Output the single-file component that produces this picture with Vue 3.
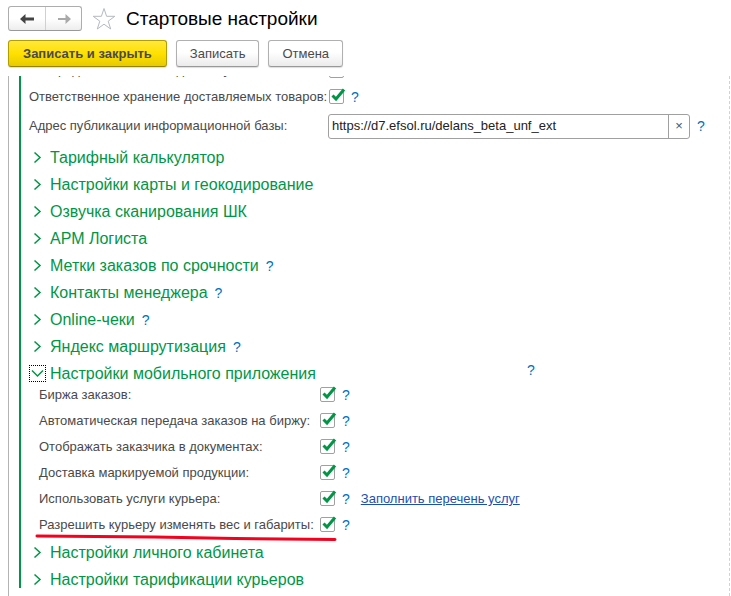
<script setup>
import { ref, reactive } from 'vue'

const address = ref('https://d7.efsol.ru/delans_beta_unf_ext')
const storage = ref(true)
const distribution = ref(false)

const groups = [
  { title: 'Тарифный калькулятор' },
  { title: 'Настройки карты и геокодирование' },
  { title: 'Озвучка сканирования ШК' },
  { title: 'АРМ Логиста' },
  { title: 'Метки заказов по срочности', help: true },
  { title: 'Контакты менеджера', help: true },
  { title: 'Online-чеки', help: true },
  { title: 'Яндекс маршрутизация', help: true },
]

const options = reactive([
  { id: 'exchange', label: 'Биржа заказов:', on: true },
  { id: 'auto', label: 'Автоматическая передача заказов на биржу:', on: true },
  { id: 'customer', label: 'Отображать заказчика в документах:', on: true },
  { id: 'marked', label: 'Доставка маркируемой продукции:', on: true },
  { id: 'services', label: 'Использовать услуги курьера:', on: true, link: 'Заполнить перечень услуг' },
  { id: 'weight', label: 'Разрешить курьеру изменять вес и габариты:', on: true, marked: true },
])

const tailGroups = [
  { title: 'Настройки личного кабинета' },
  { title: 'Настройки тарификации курьеров' },
]
</script>

<template>
  <div class="page">
    <header class="titlebar">
      <div class="history">
        <button type="button" aria-label="Назад">
          <svg width="16" height="12" viewBox="0 0 16 12"><path d="M1 6 L6.500 1 V4.500 H15 V7.500 H6.500 V11 Z" fill="#444" /></svg>
        </button>
        <button type="button" aria-label="Вперед">
          <svg width="16" height="12" viewBox="0 0 16 12"><path d="M15 6 L9.500 1 V5 H2 V7 H9.500 V11 Z" fill="#a9a9a9" /></svg>
        </button>
      </div>
      <button type="button" class="star" aria-label="В избранное">
        <svg width="24" height="24" viewBox="0 0 24 24"><path d="M12 1.500 L14.600 9.300 H22.800 L16.200 14.200 L18.700 22 L12 17.200 L5.300 22 L7.800 14.200 L1.200 9.300 H9.400 Z" fill="#fff" stroke="#b4bac0" /></svg>
      </button>
      <h1>Стартовые настройки</h1>
    </header>

    <div class="commands">
      <button type="button" class="cmd primary">Записать и закрыть</button>
      <button type="button" class="cmd">Записать</button>
      <button type="button" class="cmd">Отмена</button>
    </div>

    <main class="viewport">
      <div class="section">
        <div class="row top clipped">
          <label for="distribution">Распределение заказов доставку:</label>
          <input id="distribution" v-model="distribution" type="checkbox" class="check" />
        </div>
        <div class="row top">
          <label for="storage">Ответственное хранение доставляемых товаров:</label>
          <span class="tick">
            <input id="storage" v-model="storage" type="checkbox" class="check" />
            <svg v-if="storage" width="18" height="18" viewBox="0 0 18 18"><path d="M3.500 8.500 L7 12 L15 2.500" /></svg>
          </span>
          <button type="button" class="help">?</button>
        </div>
        <div class="row address">
          <label for="address">Адрес публикации информационной базы:</label>
          <div class="field">
            <input id="address" v-model="address" type="text" />
            <button type="button" aria-label="Очистить" @click="address = ''">×</button>
          </div>
          <button type="button" class="help">?</button>
        </div>

        <div v-for="g in groups" :key="g.title" class="group">
          <button type="button" class="toggle">
            <span class="arrow"><svg width="9" height="13" viewBox="0 0 9 13"><path d="M1.500 1.500 L7 6.500 L1.500 11.500" /></svg></span>
            {{ g.title }}
          </button>
          <button v-if="g.help" type="button" class="help">?</button>
        </div>

        <div class="group open">
          <button type="button" class="toggle">
            <span class="arrow focused"><svg width="13" height="9" viewBox="0 0 13 9"><path d="M1 1.500 L6.500 7 L12 1.500" /></svg></span>
            Настройки мобильного приложения
          </button>
          <button type="button" class="help">?</button>
        </div>

        <div class="options">
          <div v-for="o in options" :key="o.id" class="row option">
            <label :for="o.id">{{ o.label }}</label>
            <span class="tick">
              <input :id="o.id" v-model="o.on" type="checkbox" class="check" />
              <svg v-if="o.on" width="18" height="18" viewBox="0 0 18 18"><path d="M3.500 8.500 L7 12 L15 2.500" /></svg>
            </span>
            <button type="button" class="help">?</button>
            <a v-if="o.link" href="#">{{ o.link }}</a>
            <svg v-if="o.marked" class="underline" width="302" height="8" viewBox="0 0 302 8"><path d="M2 2 L120 3 L200 4.500 L300 5.500" /></svg>
          </div>
        </div>

        <div v-for="g in tailGroups" :key="g.title" class="group">
          <button type="button" class="toggle">
            <span class="arrow"><svg width="9" height="13" viewBox="0 0 9 13"><path d="M1.500 1.500 L7 6.500 L1.500 11.500" /></svg></span>
            {{ g.title }}
          </button>
        </div>
      </div>
    </main>
  </div>
</template>

<style>
body {
  background: #fff;
}
</style>

<style scoped>
.page {
  height: 100vh;
  display: flex;
  flex-direction: column;
  overflow: hidden;
  font-family: "Liberation Sans", Arial, sans-serif;
  font-size: 13px;
  line-height: 16px;
  color: #4a4a4a;
}
.page * {
  box-sizing: border-box;
}
button,
input {
  margin: 0;
  padding: 0;
  font: inherit;
  color: inherit;
}
button {
  border: 0;
  background: none;
  cursor: pointer;
}
svg {
  display: block;
  fill: none;
  flex: none;
}
.titlebar {
  display: flex;
  align-items: center;
  padding: 6px 8px 0;
}
.history {
  display: flex;
  height: 25px;
  border: 1px solid #adadad;
  border-bottom-color: #999;
  border-radius: 3px;
  background: linear-gradient(#fff 50%, #ededed);
}
.history button {
  width: 36px;
  display: flex;
  align-items: center;
  justify-content: center;
}
.history button + button {
  border-left: 1px solid #d0d0d0;
}
.star {
  margin: 0 10px;
}
h1 {
  margin: 0;
  font-size: 19px;
  line-height: 24px;
  font-weight: 400;
  color: #000;
}
.commands {
  display: flex;
  gap: 9px;
  padding: 9px 8px;
}
.cmd {
  height: 27px;
  padding: 0 13px;
  border: 1px solid #b0b0b0;
  border-bottom-color: #999;
  border-radius: 3px;
  background: linear-gradient(#fff 45%, #ebebeb);
  box-shadow: 0 1px 1px #ddd;
}
.primary {
  padding: 0 14px;
  font-weight: 700;
  border-color: #b39e00;
  border-bottom-color: #948300;
  background: linear-gradient(#ffe83c, #ffe000 50%, #e8cb00);
}
.viewport {
  flex: 1;
  min-height: 0;
  overflow: hidden;
  margin: 0 1px 0 8px;
  padding-left: 10px;
  border-left: 1px solid #b3b3b3;
  border-right: 1px dashed #d2d2d2;
}
.section {
  padding-left: 8px;
  border-left: 2px solid #009646;
}
.row {
  display: flex;
  align-items: center;
}
.top {
  height: 26px;
}
.top label {
  width: 300px;
}
.clipped {
  margin-top: -19px;
  margin-bottom: 1px;
}
.check {
  display: block;
  width: 15px;
  height: 15px;
  appearance: none;
  border: 1px solid #a0a0a0;
  border-radius: 2px;
  background: #fff;
}
.tick {
  position: relative;
  margin-bottom: 1px;
}
.tick svg {
  position: absolute;
  left: 0;
  top: -2px;
  pointer-events: none;
  stroke: #009646;
  stroke-width: 3;
}
.help {
  margin-left: 7px;
  font-size: 14px;
  color: #0071bc;
}
.address {
  height: 30px;
  margin-top: 1px;
  margin-bottom: 8px;
}
.address label {
  width: 299px;
}
.field {
  flex: 0 1 362px;
  display: flex;
  height: 25px;
  border: 1px solid #a0a0a0;
  border-radius: 3px;
}
.field input {
  flex: 1;
  min-width: 0;
  padding: 0 3px;
  border: 0;
  outline: 0;
  background: none;
  color: #222;
}
.field button {
  width: 21px;
  border-left: 1px solid #a0a0a0;
  color: #555;
}
.group {
  height: 17px;
  display: flex;
  align-items: center;
}
.group + .group {
  margin-top: 10px;
}
.toggle {
  display: flex;
  align-items: center;
  gap: 4px;
  font-size: 16px;
  line-height: 20px;
  color: #009646;
  white-space: nowrap;
}
.arrow {
  width: 17px;
  height: 17px;
  display: flex;
  align-items: center;
  justify-content: center;
}
.arrow svg {
  stroke: #009646;
  stroke-width: 1.500;
}
.focused {
  border: 1px dotted #000;
}
.open .toggle {
  width: 491px;
}
.open .help {
  align-self: flex-end;
  margin-bottom: 4px;
}
.options {
  padding: 0 0 6px 10px;
}
.option {
  position: relative;
  height: 26px;
}
.option label {
  width: 281px;
}
.option a {
  margin-left: 11px;
  color: #1a4fb4;
}
.underline {
  position: absolute;
  left: -4px;
  bottom: -4px;
  stroke: #f5001d;
  stroke-width: 3;
  stroke-linecap: round;
  pointer-events: none;
}
</style>
